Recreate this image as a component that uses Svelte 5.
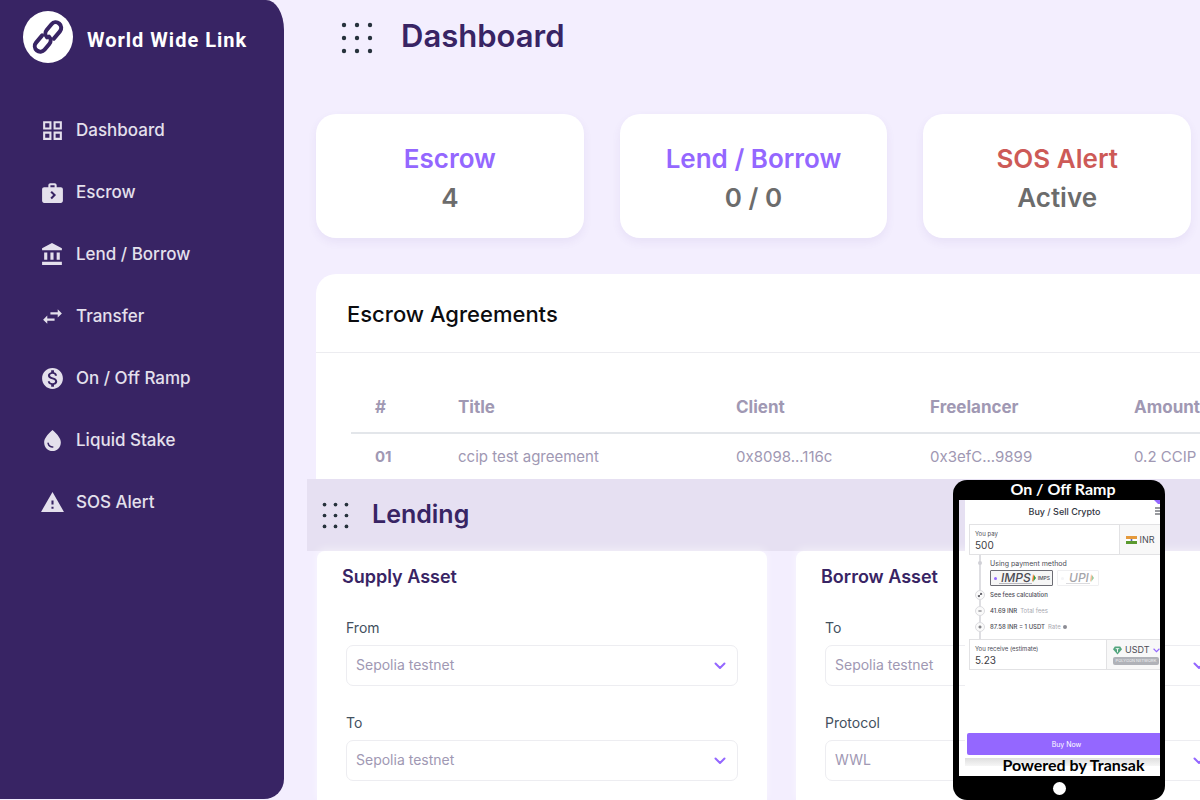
<script>
  const nav = [
    { label: 'Dashboard', d: 'M3 3v8h8V3H3zm6 6H5V5h4v4zm-6 4v8h8v-8H3zm6 6H5v-4h4v4zm4-16v8h8V3h-8zm6 6h-4V5h4v4zm-6 4v8h8v-8h-8zm6 6h-4v-4h4v4z' },
    { label: 'Escrow', d: 'M20 7h-4V5c0-1.100-.9-2-2-2h-4c-1.100 0-2 .9-2 2v2H4c-1.100 0-2 .9-2 2v11c0 1.100.9 2 2 2h16c1.100 0 2-.9 2-2V9c0-1.100-.9-2-2-2zM10 5h4v2h-4V5zm1.400 13.500L10 17.100l2.600-2.600L10 11.900l1.400-1.400 4 4-4 4z' },
    { label: 'Lend / Borrow', d: 'M4 10v7h3v-7H4zm6 0v7h3v-7h-3zM2 22h19v-3H2v3zm14-12v7h3v-7h-3zm-4.500-9L2 6v2h19V6l-9.500-5z' },
    { label: 'Transfer', d: 'M6.990 11L3 15l3.990 4v-3H14v-2H6.990v-3zM21 9l-3.990-4v3H10v2h7.010v3L21 9z' },
    { label: 'On / Off Ramp', d: 'M12 2C6.480 2 2 6.480 2 12s4.480 10 10 10 10-4.480 10-10S17.520 2 12 2zm1.410 16.090V20h-2.670v-1.930c-1.710-.36-3.160-1.460-3.270-3.400h1.960c.1 1.050.82 1.870 2.650 1.870 1.960 0 2.400-.98 2.400-1.590 0-.83-.44-1.610-2.670-2.140-2.480-.6-4.180-1.620-4.180-3.670 0-1.720 1.390-2.840 3.110-3.210V4h2.670v1.950c1.860.45 2.790 1.860 2.850 3.390H14.300c-.05-1.110-.64-1.870-2.220-1.870-1.500 0-2.400.68-2.400 1.640 0 .84.65 1.390 2.670 1.910s4.180 1.390 4.180 3.910c-.01 1.830-1.380 2.830-3.120 3.160z' },
    { label: 'Liquid Stake', d: 'M12 2c-5.330 4.550-8 8.480-8 11.800 0 4.980 3.800 8.200 8 8.200s8-3.220 8-8.200c0-3.320-2.670-7.250-8-11.800zM7.830 14c.37 0 .67.26.74.62.41 2.220 2.280 2.980 3.640 2.870.43-.02.79.32.79.75 0 .4-.32.73-.72.75-2.130.13-4.620-1.090-5.190-4.120-.08-.45.28-.87.74-.87z' },
    { label: 'SOS Alert', d: 'M1 21h22L12 2 1 21zm12-3h-2v-2h2v2zm0-4h-2v-4h2v4z' }
  ];
  const stats = [
    { name: 'Escrow', value: '4' },
    { name: 'Lend / Borrow', value: '0 / 0' },
    { name: 'SOS Alert', value: 'Active', alert: true }
  ];
  const forms = [
    { title: 'Supply Asset', fields: [['From', 'Sepolia testnet'], ['To', 'Sepolia testnet']] },
    { title: 'Borrow Asset', fields: [['To', 'Sepolia testnet'], ['Protocol', 'WWL']] }
  ];
  const dots = [3, 16, 29];
</script>

{#snippet dotGrid()}
  <svg viewBox="0 0 32 32" aria-hidden="true">
    {#each dots as y}{#each dots as x}<circle cx={x} cy={y} r="2.200" />{/each}{/each}
  </svg>
{/snippet}

<div class="page">
  <aside>
    <div class="brand">
      <svg viewBox="0 0 50 52" aria-hidden="true">
        <ellipse cx="25" cy="26" rx="25" ry="26" fill="#fff" />
        <g transform="rotate(-50 25 26)" fill="none" stroke="#382464" stroke-width="4" stroke-linecap="round">
          <path d="M22.500 20.500H13a5.500 5.500 0 0 0 0 11h7.500a5.500 5.500 0 0 0 5.500-5" />
          <path d="M27.500 31.500H37a5.500 5.500 0 0 0 0-11h-7.500a5.500 5.500 0 0 0-5.500 5" />
        </g>
      </svg>
      <span>World Wide Link</span>
    </div>
    <nav>
      {#each nav as item}
        <a href="#top"><svg viewBox="0 0 24 24" aria-hidden="true"><path d={item.d} /></svg>{item.label}</a>
      {/each}
    </nav>
  </aside>

  <main>
    <header class="top">
      <button aria-label="Menu">{@render dotGrid()}</button>
      <h1>Dashboard</h1>
    </header>

    <section class="stats">
      {#each stats as s}
        <div class="stat" class:alert={s.alert}>
          <h2>{s.name}</h2>
          <p>{s.value}</p>
        </div>
      {/each}
    </section>

    <section class="agreements">
      <h2>Escrow Agreements</h2>
      <div class="scroll">
        <table>
          <colgroup><col class="c-num" /><col class="c-title" /><col class="c-client" /><col class="c-free" /><col /></colgroup>
          <thead><tr><th>#</th><th>Title</th><th>Client</th><th>Freelancer</th><th>Amount</th></tr></thead>
          <tbody><tr><th>01</th><td>ccip test agreement</td><td>0x8098...116c</td><td>0x3efC...9899</td><td>0.2 CCIP</td></tr></tbody>
        </table>
      </div>
    </section>

    <section class="lending">
      <header>
        <button aria-label="Menu">{@render dotGrid()}</button>
        <h2>Lending</h2>
      </header>
      <div class="forms">
        {#each forms as form, i}
          <form>
            <h3>{form.title}</h3>
            {#each form.fields as [label, value], j}
              <div class="field">
                <label for="f{i}{j}">{label}</label>
                <div class="select">
                  <select id="f{i}{j}"><option>{value}</option></select>
                  <svg viewBox="0 0 12 8" aria-hidden="true"><path d="M1.500 1.500L6 6l4.500-4.500" /></svg>
                </div>
              </div>
            {/each}
          </form>
        {/each}
      </div>
    </section>
  </main>

  <div class="phone">
    <div class="cap">On / Off Ramp</div>
    <div class="screen">
      <div class="widget">
        <div class="w-head">
          <span>Buy / Sell Crypto</span>
          <svg class="corner" viewBox="0 0 6 6" aria-hidden="true"><path d="M0 0h6v4H4z" /></svg>
          <svg class="burger" viewBox="0 0 5 8" aria-hidden="true"><path d="M0 1h5M0 4h5M0 7h5" /></svg>
        </div>
        <div class="amount">
          <div class="entry"><label for="pay">You pay</label><input id="pay" value="500" /></div>
          <button class="cur inr">
            <svg viewBox="0 0 11 8" aria-hidden="true"><path fill="#e59a3c" d="M0 0h11v3H0z" /><path fill="#fff" d="M0 3h11v2H0z" /><path fill="#5b9a2f" d="M0 5h11v3H0z" /><circle cx="5.500" cy="4" r="1" fill="#4b5aa8" /></svg>
            INR
          </button>
        </div>
        <ul class="steps">
          <li class="methods">
            <i class="dot"></i>
            <div>
              <span class="cap-line">Using payment method</span>
              <div class="opts">
                <button class="opt on">
                  <b></b>
                  <span class="logo">IMPS</span>
                  <svg viewBox="0 0 4 8" aria-hidden="true"><path fill="#ef7d2d" d="M1 0l2 4-3 4z" /><path fill="#2f9a4b" d="M2 1l2 3-3 4 1-4z" /></svg>
                  <small>IMPS</small>
                </button>
                <button class="opt off">
                  <b></b>
                  <span class="logo">UPI</span>
                  <svg viewBox="0 0 4 8" aria-hidden="true"><path fill="#ef7d2d" d="M1 0l2 4-3 4z" /><path fill="#2f9a4b" d="M2 1l2 3-3 4 1-4z" /></svg>
                </button>
              </div>
            </div>
          </li>
          <li><i><svg viewBox="0 0 10 10" aria-hidden="true"><path d="M3 7l4-4M5 3h2v2M3 5v2h2" /></svg></i>See fees calculation</li>
          <li><i><svg viewBox="0 0 10 10" aria-hidden="true"><path d="M3 5h4" /></svg></i>41.69 INR <em>Total fees</em></li>
          <li><i><svg viewBox="0 0 10 10" aria-hidden="true"><path d="M3 5h4M5 3v4" /></svg></i>87.58 INR = 1 USDT <em>Rate</em><b class="info"></b></li>
        </ul>
        <div class="amount">
          <div class="entry"><label for="get">You receive (estimate)</label><input id="get" value="5.23" /></div>
          <button class="cur usdt">
            <span class="row">
              <svg viewBox="0 0 10 9" aria-hidden="true"><path fill="#53a57e" d="M2 0h6l2 3-5 6-5-6z" /><path fill="none" stroke="#fff" d="M3 2.500h4M5 2.500v4" /></svg>
              USDT
              <svg class="chev" viewBox="0 0 6 4" aria-hidden="true"><path fill="none" stroke="#9467ff" d="M.5.5L3 3 5.500.5" /></svg>
            </span>
            <span class="net">POLYGON NETWORK</span>
          </button>
        </div>
        <button class="buy">Buy Now</button>
        <div class="strip"></div>
      </div>
      <p>Powered by Transak</p>
    </div>
    <div class="foot"><span></span></div>
  </div>
</div>

<style>
  :global(body) { margin: 0; background: #f3eefe; }
  :global(*) { box-sizing: border-box; }
  .page { position: relative; display: flex; min-height: 100vh; overflow: hidden; background: #f3eefe; font-family: Inter, sans-serif; }
  h1, h2, h3, p, ul { margin: 0; padding: 0; }
  button { border: 0; padding: 0; background: none; font: inherit; color: inherit; }
  svg { display: block; flex: none; }

  aside { flex: none; width: 284px; margin-bottom: 1px; background: #382464; border-radius: 0 18px 20px 0 / 0 30px 20px 0; }
  .brand { display: flex; align-items: center; gap: 14px; height: 74px; padding-left: 23px; color: #fff; font: 700 20px/24px Roboto, sans-serif; letter-spacing: 1px; }
  .brand svg { width: 50px; height: 52px; }
  .brand span { padding-top: 5px; }
  nav { display: flex; flex-direction: column; padding: 25px 0 0 40px; }
  nav a { display: flex; align-items: center; gap: 11px; height: 62px; color: #e4e0ec; font-size: 17px; font-weight: 500; text-decoration: none; }
  nav svg { width: 25px; height: 25px; fill: currentColor; }

  main { flex: 1; min-width: 0; display: flex; flex-direction: column; }
  .top { display: flex; align-items: center; gap: 28px; height: 76px; padding-left: 57px; }
  .top button svg { width: 32px; height: 32px; fill: #26323c; }
  h1 { color: #382464; font-size: 31px; line-height: 40px; font-weight: 600; padding-bottom: 4px; }

  .stats { display: grid; grid-template-columns: repeat(3, 1fr); gap: 36px; padding: 38px 9px 36px 32px; }
  .stat { height: 124px; padding-top: 25px; border-radius: 20px; background: #fff; text-align: center; box-shadow: 0 4px 10px rgba(80, 50, 150, .07); }
  .stat h2, .stat p { font-size: 26px; line-height: 39px; font-weight: 600; color: #9467ff; }
  .stat p { color: #6c6c6c; }
  .stat.alert h2 { color: #cd5a57; }

  .agreements { margin-left: 32px; border-radius: 20px 0 0 0; background: #fff; }
  .agreements h2 { padding: 25px 31px 23px; border-bottom: 1px solid #ececf0; color: #0c0c0f; font-size: 22px; line-height: 30px; font-weight: 500; }
  .scroll { margin-left: 35px; padding-top: 29px; overflow: hidden; }
  table { width: 100%; table-layout: fixed; border-collapse: collapse; color: #a098b3; white-space: nowrap; }
  .c-num { width: 83px; } .c-title { width: 278px; } .c-client { width: 194px; } .c-free { width: 204px; }
  th, td { height: 46px; padding: 0 0 0 24px; text-align: left; font-size: 15px; }
  th { font-weight: 700; }
  thead th { height: 51px; border-bottom: 2px solid #e3e6ea; font-size: 17px; }

  .lending { flex: 1; display: flex; flex-direction: column; margin-left: 23px; }
  .lending header { display: flex; align-items: center; gap: 23px; height: 72px; padding-left: 15px; background: #e6e0f2; }
  .lending header svg { width: 27px; height: 27px; fill: #26323c; }
  .lending h2 { color: #382464; font-size: 25px; line-height: 32px; font-weight: 600; padding-bottom: 3px; }
  .forms { flex: 1; display: grid; grid-template-columns: 1fr 1fr; gap: 29px; margin: 0 -46px 0 10px; }
  form { padding: 14px 29px 0; border-radius: 8px 8px 0 0; background: #fff; box-shadow: 0 -2px 8px rgba(255, 255, 255, .5); }
  h3 { margin-left: -4px; color: #382464; font-size: 18px; line-height: 24px; font-weight: 600; }
  .field { display: flex; flex-direction: column; margin-top: 29px; }
  .field + .field { margin-top: 27px; }
  .field label { color: #43505e; font-size: 14px; line-height: 20px; }
  .select { display: grid; align-items: center; margin-top: 7px; }
  .select > * { grid-area: 1 / 1; }
  select { appearance: none; width: 100%; height: 41px; padding: 0 9px 2px; border: 1px solid #ededf1; border-radius: 7px; background: #fff; color: #a098b3; font: 14px Inter, sans-serif; }
  .select svg { justify-self: end; width: 12px; height: 8px; margin-right: 12px; fill: none; stroke: #9467ff; stroke-width: 2; stroke-linecap: round; stroke-linejoin: round; pointer-events: none; }

  .phone { position: absolute; right: 35px; bottom: 0; width: 212px; height: 320px; display: flex; flex-direction: column; overflow: hidden; border-radius: 14px; color: #4c4c55; font-size: 6px; }
  .cap { height: 20px; padding-left: 8px; background: #000; color: #fff; text-align: center; font: 700 16px/18px Lato, sans-serif; }
  .screen { flex: 1; min-height: 0; display: flex; flex-direction: column; padding-left: 6px; border: solid #000; border-width: 0 5px 0 6px; }
  .screen p { margin-top: -11px; padding-left: 22px; color: #000; text-align: center; font: 700 16px/20px Lato, sans-serif; }
  .foot { display: grid; place-items: center; height: 24px; background: #000; }
  .foot span { width: 13px; height: 13px; border-radius: 50%; background: #fff; }
  .widget { flex: none; height: 266px; display: flex; flex-direction: column; background: #fff; }
  .w-head { display: flex; justify-content: center; align-items: center; position: relative; height: 24px; padding: 0 0 2px 4px; color: #33363f; font-size: 9px; font-weight: 500; }
  .corner { position: absolute; top: 0; right: 0; width: 6px; height: 6px; fill: #9467ff; }
  .burger { position: absolute; top: 7px; right: 0; width: 5px; height: 8px; stroke: #33363f; }
  .amount { display: flex; flex: none; height: 31px; margin-left: 4px; border: 1px solid #e2e2e4; border-right: 0; }
  .entry { flex: 1; min-width: 0; display: flex; flex-direction: column; padding: 5px 0 0 5px; }
  .entry label { font-size: 6px; line-height: 8px; }
  .entry input { width: 100%; height: 14px; padding: 0; border: 0; background: none; color: #3d3d44; font: 10px/14px Inter, sans-serif; }
  .cur { flex: none; border-left: 1px solid #e2e2e4; background: #f8f8f8; font-size: 9px; }
  .inr { display: flex; align-items: center; justify-content: center; gap: 3px; width: 41px; }
  .inr svg { width: 11px; height: 8px; }
  .usdt { width: 54px; padding-left: 6px; }
  .usdt .row { display: flex; align-items: center; gap: 3px; line-height: 12px; }
  .usdt svg { width: 9px; height: 9px; }
  .usdt .chev { width: 7px; height: 5px; }
  .net { display: block; height: 8px; margin: 1px 1px 0 0; border-radius: 2px; background: #b0b2b8; color: #f4f4f6; font-size: 4px; line-height: 8px; text-align: center; }

  .steps { flex: none; height: 84px; margin-left: 10px; list-style: none; background: linear-gradient(#dedee2, #dedee2) 4px 0 / 2px 100% no-repeat; }
  li { display: flex; align-items: center; gap: 5px; height: 16px; font-weight: 500; line-height: 8px; white-space: nowrap; }
  li i { flex: none; width: 10px; height: 10px; border: 1px solid #dcdce0; border-radius: 50%; background: #fafafa; }
  li i svg { width: 8px; height: 8px; fill: none; stroke: #44444c; }
  li em { color: #a8a8b0; font-style: normal; font-weight: 400; margin-left: -2px; }
  .info { width: 4px; height: 4px; margin-left: -3px; border-radius: 50%; background: #8c8c94; }
  .methods { align-items: flex-start; height: 32px; }
  li .dot { width: 4px; height: 4px; margin: 6px 3px 0; border: 0; background: #d0d0d6; }
  .cap-line { display: block; padding-top: 4px; font-size: 7px; line-height: 9px; font-weight: 400; }
  .opts { display: flex; gap: 4px; margin-top: 2px; }
  .opt { display: flex; align-items: center; gap: 2px; height: 16px; padding: 0 2px 0 3px; border: 1px solid #6c6c74; border-radius: 1px; background: #f6f6f6; }
  .opt b { width: 3px; height: 3px; border-radius: 50%; background: #9467ff; }
  .opt .logo { font-size: 12px; line-height: 10px; font-style: italic; font-weight: 500; border-bottom: 1px solid #b8b8be; padding: 0 1px 0 2px; }
  .opt svg { width: 4px; height: 8px; margin-left: -2px; }
  .opt small { font-size: 5px; }
  .opt.off { padding-right: 4px; border-color: #e0e0e4; background: #fff; opacity: .5; }
  .opt.off b { background: #ececf0; }
  .opt.off .logo { padding-left: 3px; }
  .buy { flex: none; height: 22px; margin: 63px 0 0 2px; border-radius: 2px 0 0 2px; background: #9467ff; color: #fff; font-size: 7px; padding-left: 6px; }
  .strip { height: 8px; margin-top: 3px; background: linear-gradient(#dedede, #f6f6f6); }
</style>
